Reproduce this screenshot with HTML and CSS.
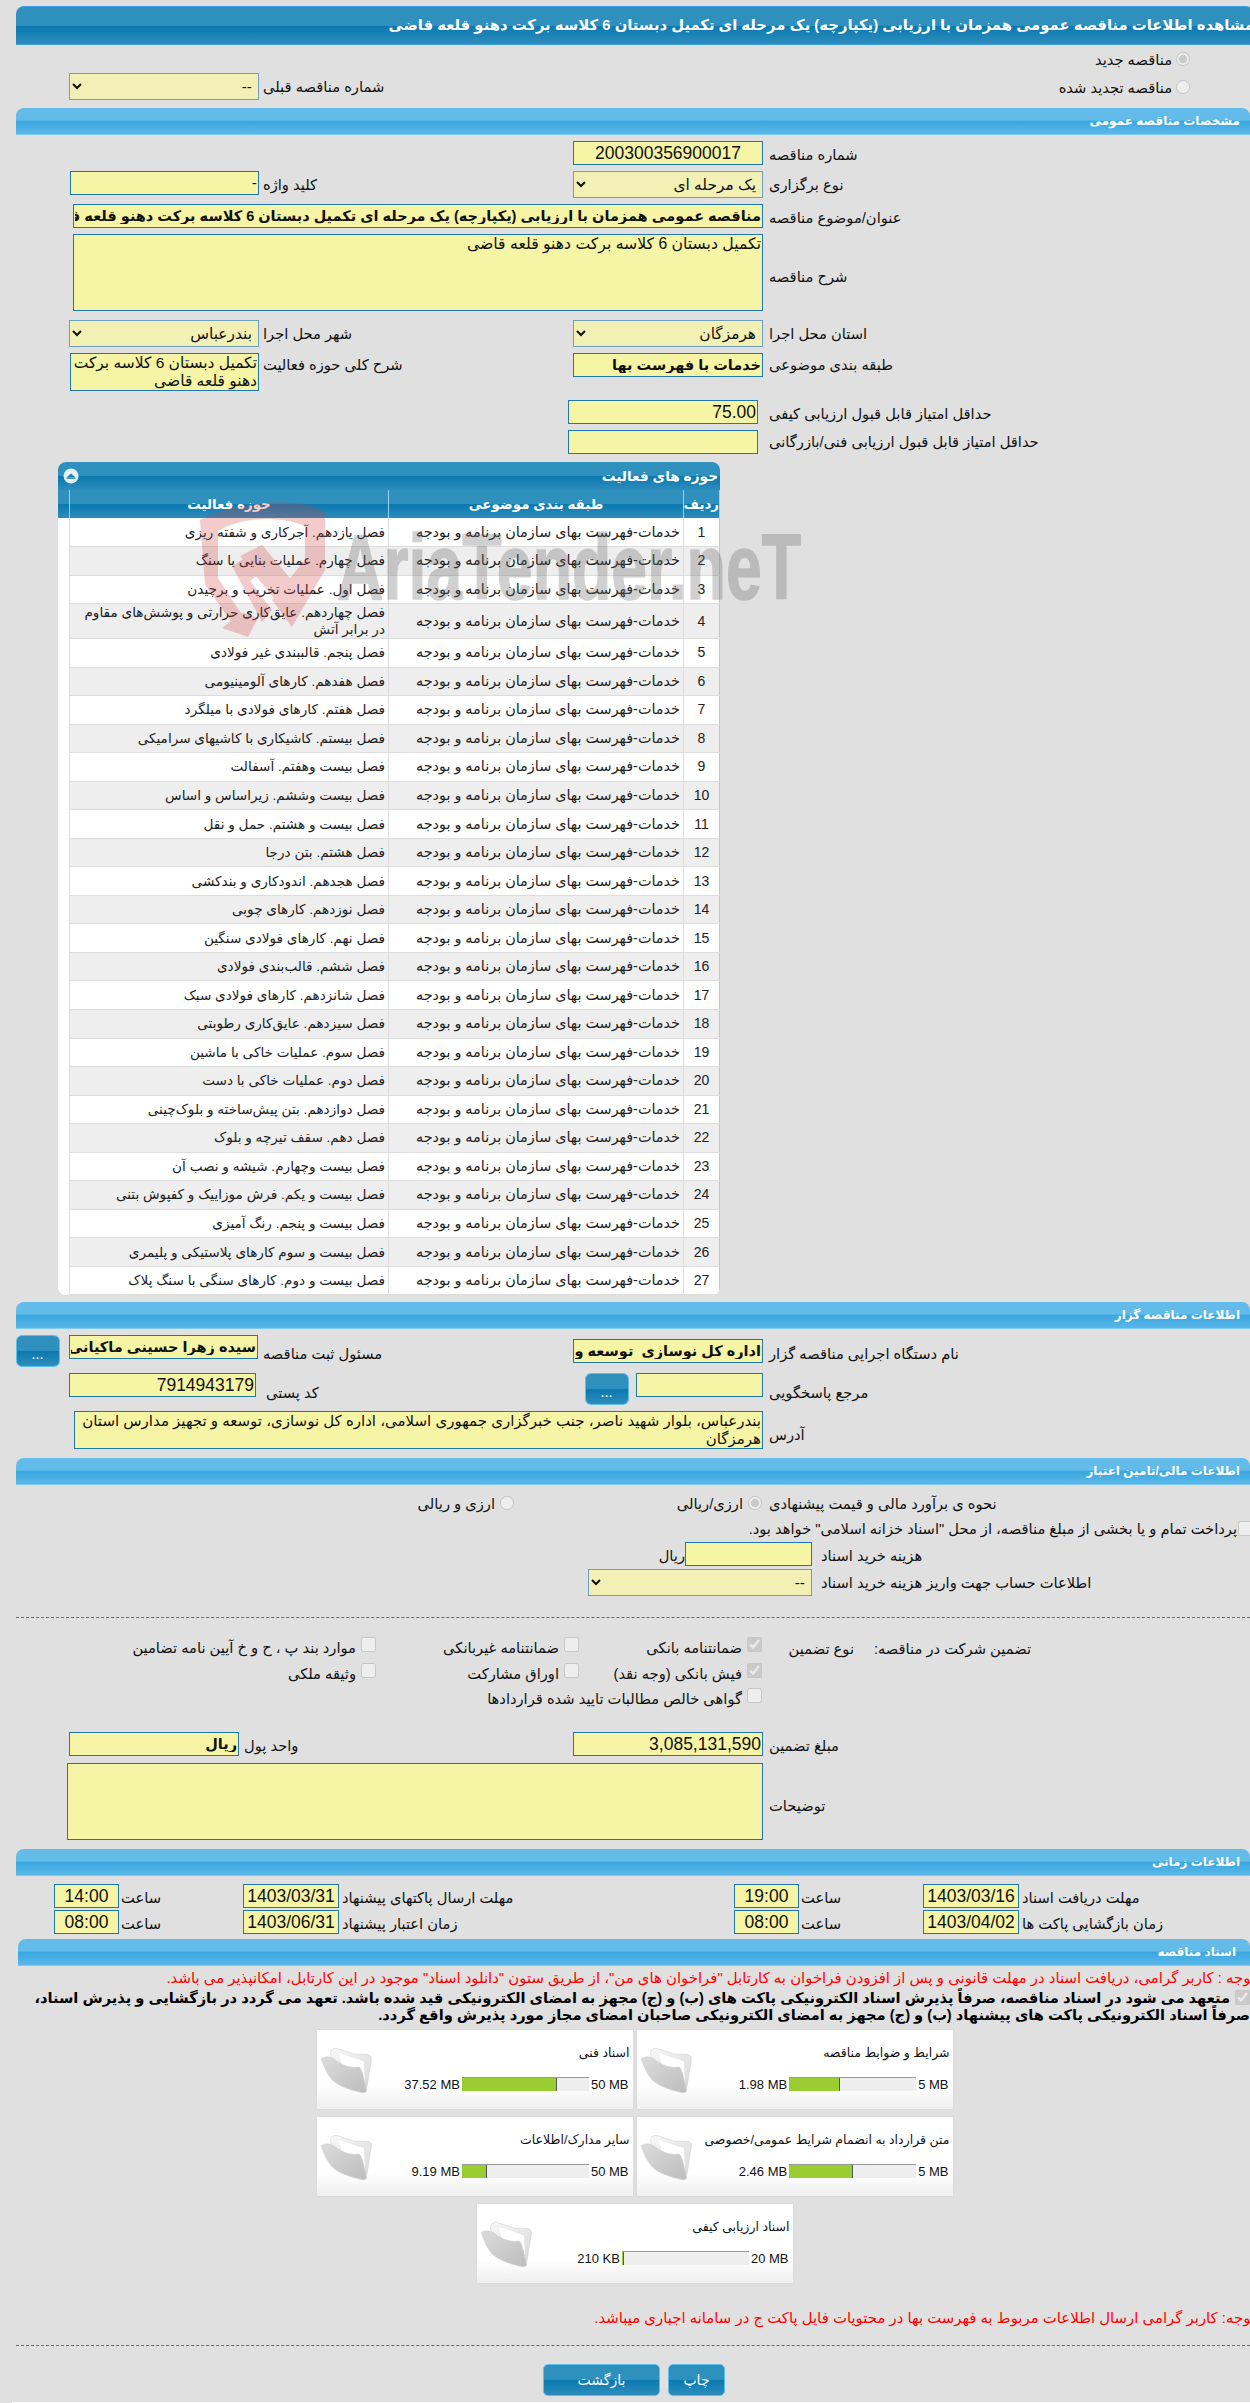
FILE: index.html
```html
<!DOCTYPE html>
<html lang="fa" dir="rtl">
<head>
<meta charset="utf-8">
<title>مشاهده اطلاعات مناقصه</title>
<link rel="stylesheet" href="styles.css">
</head>
<body>
<svg class="defs" width="0" height="0" aria-hidden="true">
  <defs>
    <linearGradient id="fb" x1="0" y1="0" x2="1" y2="1"><stop offset="0" stop-color="#f8f8f8"/><stop offset="1" stop-color="#d8d8d8"/></linearGradient>
    <linearGradient id="ff" x1="0" y1="0" x2="1" y2="1"><stop offset="0" stop-color="#dcdcdc"/><stop offset="1" stop-color="#bdbdbd"/></linearGradient>
    <symbol id="folder" viewBox="30 60 165 150">
      <path d="M62 82 Q66 66 84 70 L128 84 Q138 90 150 86 L178 88 Q190 92 186 108 L172 196 L70 130Z" fill="url(#fb)" stroke="#d4d4d4" stroke-width="2"/>
      <path d="M86 82 L164 108 L168 180 L100 130Z" fill="#fff"/>
      <path d="M34 100 Q58 86 84 110 Q118 132 150 126 Q160 134 172 200 Q168 208 150 202 Q96 190 70 168 Q48 146 34 100Z" fill="url(#ff)" stroke="#cfcfcf" stroke-width="2"/>
    </symbol>
  </defs>
</svg>

<div class="page">
  <header class="title-bar">مشاهده اطلاعات مناقصه عمومی همزمان با ارزیابی (یکپارچه) یک مرحله ای تکمیل دبستان 6 کلاسه برکت دهنو قلعه قاضی</header>

  <div class="form form-top">
    <label class="radio-cell"><input type="radio" name="kind" checked disabled>مناقصه جدید</label>
    <span></span><span></span><span></span>
    <label class="radio-cell"><input type="radio" name="kind" disabled>مناقصه تجدید شده</label>
    <span></span>
    <span class="lbl">شماره مناقصه قبلی</span>
    <div class="cell cell-l"><select class="sel w190"><option>--</option></select></div>
  </div>

  <h2 class="bar">مشخصات مناقصه عمومی</h2>
  <div class="form form-general">
    <span class="lbl">شماره مناقصه</span>
    <div class="cell"><input class="inp num center w190" readonly value="200300356900017"></div>
    <span></span><span></span>

    <span class="lbl">نوع برگزاری</span>
    <div class="cell"><select class="sel w190"><option>یک مرحله ای</option></select></div>
    <span class="lbl">کلید واژه</span>
    <div class="cell cell-l"><input class="inp w189" readonly value="-"></div>

    <span class="lbl">عنوان/موضوع مناقصه</span>
    <div class="cell span3"><input class="inp strong w690" readonly value="مناقصه عمومی همزمان با ارزیابی (یکپارچه) یک مرحله ای تکمیل دبستان 6 کلاسه برکت دهنو قلعه قاضی"></div>

    <span class="lbl lbl-mid">شرح مناقصه</span>
    <div class="cell span3"><textarea class="area area-lg w690 h77" readonly>تکمیل دبستان 6 کلاسه برکت دهنو قلعه قاضی</textarea></div>

    <span class="lbl">استان محل اجرا</span>
    <div class="cell"><select class="sel w190"><option>هرمزگان</option></select></div>
    <span class="lbl">شهر محل اجرا</span>
    <div class="cell cell-l"><select class="sel w190"><option>بندرعباس</option></select></div>

    <span class="lbl lbl-24">طبقه بندی موضوعی</span>
    <div class="cell"><input class="inp strong w190" readonly value="خدمات با فهرست بها"></div>
    <span class="lbl lbl-24">شرح کلی حوزه فعالیت</span>
    <div class="cell cell-l"><textarea class="area w189 h38" readonly>تکمیل دبستان 6 کلاسه برکت دهنو قلعه قاضی</textarea></div>

    <span class="lbl">حداقل امتیاز قابل قبول ارزیابی کیفی</span>
    <div class="cell cell-score"><input class="inp num w190" readonly value="75.00"></div>
    <span></span><span></span>

    <span class="lbl lbl-24">حداقل امتیاز قابل قبول ارزیابی فنی/بازرگانی</span>
    <div class="cell cell-score"><input class="inp num w190" readonly></div>
    <span></span><span></span>
  </div>

  <section class="panel">
    <div class="panel-head">
      <h3>حوزه های فعالیت</h3>
      <svg class="toggle" width="16" height="16" viewBox="0 0 16 16" aria-hidden="true"><circle cx="8" cy="8" r="7.5" fill="#e4f1f8"/><path d="M3.5 9.6 L8 5.4 L12.5 9.6Z" fill="#1f7fb0"/><rect x="3.5" y="9.6" width="9" height="1.2" fill="#1f7fb0"/></svg>
    </div>
    <table class="grid">
      <colgroup><col class="c-num"><col class="c-cat"><col class="c-act"><col class="c-end"></colgroup>
      <thead><tr><th>ردیف</th><th>طبقه بندی موضوعی</th><th>حوزه فعالیت</th><th></th></tr></thead>
      <tbody>
        <tr><td>1</td><td>خدمات-فهرست بهای سازمان برنامه و بودجه</td><td>فصل یازدهم. آجرکاری و شفته ریزی</td><td></td></tr>
        <tr><td>2</td><td>خدمات-فهرست بهای سازمان برنامه و بودجه</td><td>فصل چهارم. عملیات بنایی با سنگ</td><td></td></tr>
        <tr><td>3</td><td>خدمات-فهرست بهای سازمان برنامه و بودجه</td><td>فصل اول. عملیات تخریب و برچیدن</td><td></td></tr>
        <tr class="two"><td>4</td><td>خدمات-فهرست بهای سازمان برنامه و بودجه</td><td>فصل چهاردهم. عایق‌کاری حرارتی و پوشش‌های مقاوم در برابر آتش</td><td></td></tr>
        <tr><td>5</td><td>خدمات-فهرست بهای سازمان برنامه و بودجه</td><td>فصل پنجم. قالببندی غیر فولادی</td><td></td></tr>
        <tr><td>6</td><td>خدمات-فهرست بهای سازمان برنامه و بودجه</td><td>فصل هفدهم. کارهای آلومینیومی</td><td></td></tr>
        <tr><td>7</td><td>خدمات-فهرست بهای سازمان برنامه و بودجه</td><td>فصل هفتم. کارهای فولادی با میلگرد</td><td></td></tr>
        <tr><td>8</td><td>خدمات-فهرست بهای سازمان برنامه و بودجه</td><td>فصل بیستم. کاشیکاری با کاشیهای سرامیکی</td><td></td></tr>
        <tr><td>9</td><td>خدمات-فهرست بهای سازمان برنامه و بودجه</td><td>فصل بیست وهفتم. آسفالت</td><td></td></tr>
        <tr><td>10</td><td>خدمات-فهرست بهای سازمان برنامه و بودجه</td><td>فصل بیست وششم. زیراساس و اساس</td><td></td></tr>
        <tr><td>11</td><td>خدمات-فهرست بهای سازمان برنامه و بودجه</td><td>فصل بیست و هشتم. حمل و نقل</td><td></td></tr>
        <tr><td>12</td><td>خدمات-فهرست بهای سازمان برنامه و بودجه</td><td>فصل هشتم. بتن درجا</td><td></td></tr>
        <tr><td>13</td><td>خدمات-فهرست بهای سازمان برنامه و بودجه</td><td>فصل هجدهم. اندودکاری و بندکشی</td><td></td></tr>
        <tr><td>14</td><td>خدمات-فهرست بهای سازمان برنامه و بودجه</td><td>فصل نوزدهم. کارهای چوبی</td><td></td></tr>
        <tr><td>15</td><td>خدمات-فهرست بهای سازمان برنامه و بودجه</td><td>فصل نهم. کارهای فولادی سنگین</td><td></td></tr>
        <tr><td>16</td><td>خدمات-فهرست بهای سازمان برنامه و بودجه</td><td>فصل ششم. قالب‌بندی فولادی</td><td></td></tr>
        <tr><td>17</td><td>خدمات-فهرست بهای سازمان برنامه و بودجه</td><td>فصل شانزدهم. کارهای فولادی سبک</td><td></td></tr>
        <tr><td>18</td><td>خدمات-فهرست بهای سازمان برنامه و بودجه</td><td>فصل سیزدهم. عایق‌کاری رطوبتی</td><td></td></tr>
        <tr><td>19</td><td>خدمات-فهرست بهای سازمان برنامه و بودجه</td><td>فصل سوم. عملیات خاکی با ماشین</td><td></td></tr>
        <tr><td>20</td><td>خدمات-فهرست بهای سازمان برنامه و بودجه</td><td>فصل دوم. عملیات خاکی با دست</td><td></td></tr>
        <tr><td>21</td><td>خدمات-فهرست بهای سازمان برنامه و بودجه</td><td>فصل دوازدهم. بتن پیش‌ساخته و بلوک‌چینی</td><td></td></tr>
        <tr><td>22</td><td>خدمات-فهرست بهای سازمان برنامه و بودجه</td><td>فصل دهم. سقف تیرچه و بلوک</td><td></td></tr>
        <tr><td>23</td><td>خدمات-فهرست بهای سازمان برنامه و بودجه</td><td>فصل بیست وچهارم. شیشه و نصب آن</td><td></td></tr>
        <tr><td>24</td><td>خدمات-فهرست بهای سازمان برنامه و بودجه</td><td>فصل بیست و یکم. فرش موزاییک و کفپوش بتنی</td><td></td></tr>
        <tr><td>25</td><td>خدمات-فهرست بهای سازمان برنامه و بودجه</td><td>فصل بیست و پنجم. رنگ آمیزی</td><td></td></tr>
        <tr><td>26</td><td>خدمات-فهرست بهای سازمان برنامه و بودجه</td><td>فصل بیست و سوم کارهای پلاستیکی و پلیمری</td><td></td></tr>
        <tr><td>27</td><td>خدمات-فهرست بهای سازمان برنامه و بودجه</td><td>فصل بیست و دوم. کارهای سنگی با سنگ پلاک</td><td></td></tr>
      </tbody>
    </table>
  </section>

  <h2 class="bar">اطلاعات مناقصه گزار</h2>
  <div class="form form-org">
    <span class="lbl lbl-org1">نام دستگاه اجرایی مناقصه گزار</span>
    <div class="cell pt4"><input class="inp strong w190" readonly value="اداره کل نوسازی  توسعه و تجهیز مدارس استان هرمزگان"></div>
    <span class="lbl lbl-org1">مسئول ثبت مناقصه</span>
    <div class="cell cell-l cell-btn"><input class="inp strong w189 mt4" readonly value="سیده زهرا حسینی ماکیانی"><button class="dots" type="button">...</button></div>

    <span class="lbl lbl-org2">مرجع پاسخگویی</span>
    <div class="cell cell-ref"><input class="inp w127 mt1" readonly><button class="dots" type="button">...</button></div>
    <span class="lbl lbl-org2 pl3">کد پستی</span>
    <div class="cell cell-post"><input class="inp num w187 mt4" readonly value="7914943179"></div>

    <span class="lbl lbl-mid">آدرس</span>
    <div class="cell span3"><textarea class="area area-addr w689 h38" readonly>بندرعباس، بلوار شهید ناصر، جنب خبرگزاری جمهوری اسلامی، اداره کل نوسازی، توسعه و تجهیز مدارس استان هرمزگان</textarea></div>
  </div>

  <h2 class="bar">اطلاعات مالی/تامین اعتبار</h2>
  <div class="form form-fin">
    <span class="lbl">نحوه ی برآورد مالی و قیمت پیشنهادی</span>
    <label class="opt opt-a"><input type="radio" name="cur" checked disabled>ارزی/ریالی</label>
    <label class="opt opt-b"><input type="radio" name="cur" disabled>ارزی و ریالی</label>
    <span></span>
  </div>
  <label class="treasury"><input type="checkbox" disabled>پرداخت تمام و یا بخشی از مبلغ مناقصه، از محل "اسناد خزانه اسلامی" خواهد بود.</label>
  <div class="fee-row">
    <span class="lbl fee-lbl">هزینه خرید اسناد</span>
    <input class="inp w127" readonly>
    <span class="lbl">ریال</span>
  </div>
  <div class="fee-row fee-acc">
    <span class="lbl fee-lbl">اطلاعات حساب جهت واریز هزینه خرید اسناد</span>
    <select class="sel w224"><option>--</option></select>
  </div>
  <hr class="dash">

  <div class="guar">
    <span></span>
    <span class="guar-t">تضمین شرکت در مناقصه:</span>
    <span class="guar-t">نوع تضمین</span>
    <label class="chk"><input type="checkbox" checked disabled>ضمانتنامه بانکی</label>
    <label class="chk"><input type="checkbox" disabled>ضمانتنامه غیربانکی</label>
    <label class="chk"><input type="checkbox" disabled>موارد بند پ ، ح و خ آیین نامه تضامین</label>
    <span></span><span></span><span></span>
    <label class="chk"><input type="checkbox" checked disabled>فیش بانکی (وجه نقد)</label>
    <label class="chk"><input type="checkbox" disabled>اوراق مشارکت</label>
    <label class="chk"><input type="checkbox" disabled>وثیقه ملکی</label>
    <span></span><span></span><span></span>
    <label class="chk chk-wide"><input type="checkbox" disabled>گواهی خالص مطالبات تایید شده قراردادها</label>
  </div>

  <div class="form form-money">
    <span class="lbl">مبلغ تضمین</span>
    <div class="cell"><input class="inp num w190" readonly value="3,085,131,590"></div>
    <span class="lbl">واحد پول</span>
    <div class="cell cell-unit"><input class="inp strong w170" readonly value="ریال"></div>
    <span class="lbl lbl-mid">توضیحات</span>
    <div class="cell span3"><textarea class="area w696 h77" readonly></textarea></div>
  </div>

  <h2 class="bar">اطلاعات زمانی</h2>
  <div class="dates">
    <span class="lbl">مهلت دریافت اسناد</span>
    <div class="cell"><input class="inp num center w96" readonly value="1403/03/16"></div>
    <span class="lbl">ساعت</span>
    <div class="cell c2"><input class="inp num center w65" readonly value="19:00"></div>
    <span class="lbl">مهلت ارسال پاکتهای پیشنهاد</span>
    <div class="cell"><input class="inp num center w96" readonly value="1403/03/31"></div>
    <span class="lbl">ساعت</span>
    <div class="cell c2"><input class="inp num center w65" readonly value="14:00"></div>

    <span class="lbl">زمان بازگشایی پاکت ها</span>
    <div class="cell"><input class="inp num center w96" readonly value="1403/04/02"></div>
    <span class="lbl">ساعت</span>
    <div class="cell c2"><input class="inp num center w65" readonly value="08:00"></div>
    <span class="lbl">زمان اعتبار پیشنهاد</span>
    <div class="cell"><input class="inp num center w96" readonly value="1403/06/31"></div>
    <span class="lbl">ساعت</span>
    <div class="cell c2"><input class="inp num center w65" readonly value="08:00"></div>
  </div>

  <h2 class="bar bar-docs">اسناد مناقصه</h2>
  <p class="note note-1">توجه : کاربر گرامی، دریافت اسناد در مهلت قانونی و پس از افزودن فراخوان به کارتابل "فراخوان های من"، از طریق ستون "دانلود اسناد" موجود در این کارتابل، امکانپذیر می باشد.</p>
  <p class="pledge"><input type="checkbox" checked disabled>متعهد می شود در اسناد مناقصه، صرفاً پذیرش اسناد الکترونیکی پاکت های (ب) و (ج) مجهز به امضای الکترونیکی قید شده باشد. تعهد می گردد در بازگشایی و پذیرش اسناد،<br>صرفاً اسناد الکترونیکی پاکت های پیشنهاد (ب) و (ج) مجهز به امضای الکترونیکی صاحبان امضای مجاز مورد پذیرش واقع گردد.</p>

  <div class="cards">
    <article class="card">
      <h4>شرایط و ضوابط مناقصه</h4>
      <div class="meter-row"><span dir="ltr">5 MB</span><div class="meter"><i style="width:40%"></i></div><span dir="ltr">1.98 MB</span></div>
      <svg class="folder"><use href="#folder"/></svg>
    </article>
    <article class="card">
      <h4>اسناد فنی</h4>
      <div class="meter-row"><span dir="ltr">50 MB</span><div class="meter"><i style="width:75%"></i></div><span dir="ltr">37.52 MB</span></div>
      <svg class="folder"><use href="#folder"/></svg>
    </article>
    <article class="card">
      <h4>متن قرارداد به انضمام شرایط عمومی/خصوصی</h4>
      <div class="meter-row"><span dir="ltr">5 MB</span><div class="meter"><i style="width:50%"></i></div><span dir="ltr">2.46 MB</span></div>
      <svg class="folder"><use href="#folder"/></svg>
    </article>
    <article class="card">
      <h4>سایر مدارک/اطلاعات</h4>
      <div class="meter-row"><span dir="ltr">50 MB</span><div class="meter"><i style="width:20%"></i></div><span dir="ltr">9.19 MB</span></div>
      <svg class="folder"><use href="#folder"/></svg>
    </article>
    <article class="card">
      <h4>اسناد ارزیابی کیفی</h4>
      <div class="meter-row"><span dir="ltr">20 MB</span><div class="meter"><i style="width:2%"></i></div><span dir="ltr">210 KB</span></div>
      <svg class="folder"><use href="#folder"/></svg>
    </article>
  </div>

  <p class="note note-2">توجه: کاربر گرامی ارسال اطلاعات مربوط به فهرست بها در محتویات فایل پاکت ج در سامانه اجباری میباشد.</p>
  <hr class="dash dash-2">
  <div class="actions">
    <button class="action act-print" type="button">چاپ</button>
    <button class="action act-back" type="button">بازگشت</button>
  </div>
  <div class="foot-line"></div>

  <div class="watermark" aria-hidden="true">
    <svg class="wm-shield" width="140" height="150" viewBox="195 495 140 150">
      <path d="M200 520 C230 503 298 495 325 512 L325 570 L292 627 L272 600 L305 560 L305 526 C280 515 240 517 218 531 L218 578 L240 612 L258 618 L248 637 L222 628 L231 621 L205 585Z" fill="#d43c3c"/>
      <path d="M262 545 L300 590 L285 612 L240 556Z M232 566 L248 556 L262 572 L250 581 L272 610 L262 622Z" fill="#d43c3c"/>
    </svg>
    <span class="wm-text">AriaTender.neT</span>
  </div>
</div>
</body>
</html>
```

FILE: styles.css
```css
html, body { margin: 0; padding: 0; background: #e0e0e0; overflow: hidden; }
body { font-family: "Liberation Sans", "DejaVu Sans", sans-serif; font-size: 14.7px; color: #111; }
.defs { position: absolute; }
.page { position: relative; width: 1250px; height: 2403px; padding-top: 6px; box-sizing: border-box; overflow: hidden; }

.title-bar {
  margin: 0 -4px 0 0; margin-left: 16px; height: 39px; box-sizing: border-box; border: 1px solid #3a9fe4; border-width: 1px 0;
  border-radius: 8px 8px 0 0; color: #fff; font-weight: bold; font-size: 14.8px; line-height: 37px; white-space: nowrap;
  background: linear-gradient(#2f90be 0, #2f90be 50%, #0a79b0 52%, #2e8dbc 100%);
}
.bar {
  margin: 0 0 0 16px; height: 27px; box-sizing: border-box; border-radius: 8px 8px 0 0;
  background: linear-gradient(#63bbe9 0, #63bbe9 47%, #39a7e1 50%, #5ab7e7 100%);
  border-bottom: 1px solid #7fcbef; color: #fff; font-weight: bold; font-size: 12px; line-height: 27px; padding-right: 10px;
}
.bar-docs { margin-left: 18px; padding-right: 14px; }

.form { display: grid; grid-template-columns: 481px 196px 310px 263px; }
.form-top { grid-template-rows: 28px 28px 7px; height: 63px; }
.form-general { grid-template-rows: 30px 33px 30px 86px 33px 47px 30px 32px; padding-top: 6px; }
.form-org { grid-template-rows: 38px 38px 47px; padding-top: 6px; }
.form-fin { grid-template-rows: 26px; padding-top: 5px; }
.form-money { grid-template-columns: 481px 196px 329px 244px; grid-template-rows: 31px 86px; }

.lbl { text-align: left; line-height: 28px; white-space: nowrap; }
.lbl-24 { line-height: 24px; }
.lbl-mid { align-self: center; }
.lbl-org1 { line-height: 34px; padding-top: 2px; }
.lbl-org2 { line-height: 36px; padding-top: 2px; }
.pl3 { padding-left: 3px; }
.cell { padding-right: 6px; display: flex; align-items: flex-start; }
.cell-l { padding-right: 4px; }
.cell-score { padding-right: 11px; }
.cell-post { padding-right: 7px; }
.cell-unit { padding-right: 5px; }
.cell-btn { gap: 9px; padding-right: 5px; }
.cell-ref { gap: 7px; }
.span3 { grid-column: 2 / 5; }
.pt4 { padding-top: 4px; }
.mt4 { margin-top: 4px; }
.mt1 { margin-top: 1px; }

.inp, .sel, .area { box-sizing: border-box; font-family: inherit; color: #111; margin: 0; border-radius: 0; outline: 0; }
.inp { height: 24px; background: #f6f4a5; border: 1px solid #1f78ae; padding: 0 1px; font-size: 15.5px; }
.num { font-size: 17.5px; }
.center { text-align: center; }
.strong { font-weight: bold; font-size: 14.5px; }
.sel { height: 27px; background-color: #f2f0b4; border: 1px solid #6d9fbe; font-size: 15.4px; padding: 0 2px; }
.area { background: #f6f4a5; border: 1px solid #1f78ae; padding: 0 1px; font-size: 15.5px; resize: none; overflow: hidden; display: block; line-height: 18px; }
.area-lg { font-size: 15.7px; }
.area-addr { font-size: 15px; }
.w65 { width: 65px; } .w96 { width: 96px; } .w127 { width: 127px; } .w170 { width: 170px; } .w187 { width: 187px; }
.w189 { width: 189px; } .w190 { width: 190px; } .w224 { width: 224px; } .w689 { width: 689px; } .w690 { width: 690px; } .w696 { width: 696px; }
.h38 { height: 38px; } .h77 { height: 77px; }

.radio-cell { padding-right: 60px; display: flex; align-items: center; gap: 4px; white-space: nowrap; }
.radio-cell input, .opt input { width: 14px; height: 14px; margin: 0; flex: none; }

.panel { width: 662px; margin: 0 530px 7px 0; box-sizing: border-box; border-radius: 8px; background: #fff; overflow: hidden; }
.panel-head { height: 28px; display: flex; align-items: center; justify-content: space-between; padding: 0 2px 0 5px; background: linear-gradient(#2f90be 0, #2f90be 48%, #0a79b0 52%, #2e8dbc 100%); color: #fff; }
.panel-head h3 { margin: 0; font-size: 13.7px; font-weight: bold; }
.toggle { display: block; }
.grid { width: 662px; table-layout: fixed; border-collapse: collapse; font-size: 14.4px; border-right: 1px solid #a6cfe9; border-left: 1px solid #a6cfe9; }
.c-num { width: 36px; } .c-cat { width: 295px; } .c-act { width: 319px; } .c-end { width: 12px; }
.grid th { height: 28px; padding: 0; color: #fff; font-size: 13.4px; font-weight: bold; border-left: 1px solid #8fd4f5; background: linear-gradient(#2f90be 0, #2f90be 48%, #0a79b0 52%, #2e8dbc 100%); }
.grid th:last-child { border-left: 0; }
.grid td { height: 28.54px; box-sizing: border-box; padding: 0 3px; line-height: 17px; border-left: 1px solid #ddd; border-bottom: 1px solid #ddd; text-align: right; color: #222; }
.grid td:first-child { text-align: center; font-size: 14px; }
.grid td:nth-child(3) { font-size: 13.6px; }
.grid td:last-child { border: 0; background: #fff; }
.grid tbody tr:nth-child(even) td { background: #eee; }
.grid tbody tr:nth-child(even) td:last-child { background: #fff; }
.grid tr.two td { height: 35px; }

.opt { display: flex; align-items: center; gap: 5px; white-space: nowrap; }
.opt-a { padding-right: 7px; }
.opt-b { padding-right: 59px; }
.treasury { display: flex; align-items: center; gap: 1px; margin-right: -3px; height: 24px; white-space: nowrap; }
.treasury input { width: 15px; height: 15px; margin: 0; flex: none; }
.fee-row { display: flex; align-items: flex-start; height: 27px; margin-top: 2px; }
.fee-acc { margin-top: 0; }
.fee-lbl { flex: none; width: 438px; box-sizing: border-box; padding-left: 9px; }

.dash { border: 0; border-top: 1px dashed #2a7da8; margin: 21px 0 0 16px; height: 0; }
.dash-2 { margin-top: 17px; }

.guar { display: grid; grid-template-columns: 219px 177px 92px 183px 203px 376px; grid-auto-rows: 25.5px; padding-top: 19px; height: 95px; }
.guar-t { line-height: 24px; white-space: nowrap; }
.chk { display: flex; align-items: flex-start; gap: 5px; white-space: nowrap; line-height: 22px; }
.chk input { width: 15px; height: 15px; margin: 0; flex: none; }
.chk-wide { grid-column: 4 / 7; }

.dates { display: grid; grid-template-columns: 228px 103px 118px 67px 392px 99px 122px 121px; grid-template-rows: 26px 29px; padding-top: 8px; }
.dates .cell { padding-right: 3px; }
.dates .c2 { padding-right: 2px; }

.note { color: #f00; white-space: nowrap; font-size: 14.9px; }
.note-1 { margin: 0 -5px 0 0; line-height: 24px; }
.pledge { margin: 0; color: #000; font-weight: bold; font-size: 14.65px; white-space: nowrap; line-height: 17px; }
.pledge input { width: 15px; height: 15px; margin: 0 0 0 5px; vertical-align: -2px; }

.cards { width: 637px; margin: 6px 297px 0 0; display: flex; flex-wrap: wrap; justify-content: center; gap: 8px 4px; }
.card { position: relative; width: 316px; height: 79px; box-sizing: border-box; padding: 15px 3px 0 4px; background: linear-gradient(#fff 0, #fff 70%, #efefef 100%); box-shadow: 0 0 2px #d0d0d0; }
.card h4 { margin: 0; font-size: 12.5px; font-weight: normal; line-height: 17px; color: #111; }
.meter-row { display: flex; align-items: center; gap: 2px; margin-top: 15px; font-size: 13px; height: 14px; padding-right: 1px; }
.meter { direction: ltr; width: 127px; height: 14px; background: #eee; border-top: 1px solid #999; box-sizing: border-box; }
.meter i { display: block; height: 100%; background: #9acd32; border-right: 1px solid #555; box-sizing: border-box; min-width: 2px; }
.folder { position: absolute; left: 3px; top: 15px; width: 54px; height: 50px; }

.note-2 { margin: 25px -5px 0 0; line-height: 20px; }
.actions { display: flex; gap: 8px; padding-right: 525px; margin-top: 18px; }
.action { height: 32px; box-sizing: border-box; border: 1px solid #5cc0ee; border-radius: 5px; color: #fff; font-family: inherit; font-size: 14px; background: linear-gradient(#2f90be 0, #2f90be 48%, #0a79b0 52%, #2e8dbc 100%); padding: 0; }
.act-print { width: 57px; }
.act-back { width: 117px; }
.dots { width: 44px; height: 32px; padding: 8px 0 0; box-sizing: border-box; border: 1px solid #5cc0ee; border-radius: 6px; color: #fff; font-weight: bold; font-size: 11px; letter-spacing: 1px; background: linear-gradient(#2f90be 0, #2f90be 48%, #0a79b0 52%, #2e8dbc 100%); font-family: inherit; flex: none; }
.foot-line { height: 1px; background: #fff; margin: 6px 0 0 12px; }

.watermark { position: absolute; left: 0; top: 0; width: 1250px; height: 700px; pointer-events: none; direction: ltr; }
.wm-shield { position: absolute; left: 195px; top: 495px; opacity: .26; }
.wm-text { position: absolute; left: 337px; top: 512px; font: bold 92px/110px "Liberation Sans", sans-serif; color: #666; -webkit-text-stroke: 1.5px #666; opacity: .3; transform: scaleX(.7); transform-origin: 0 0; white-space: nowrap; }
```
